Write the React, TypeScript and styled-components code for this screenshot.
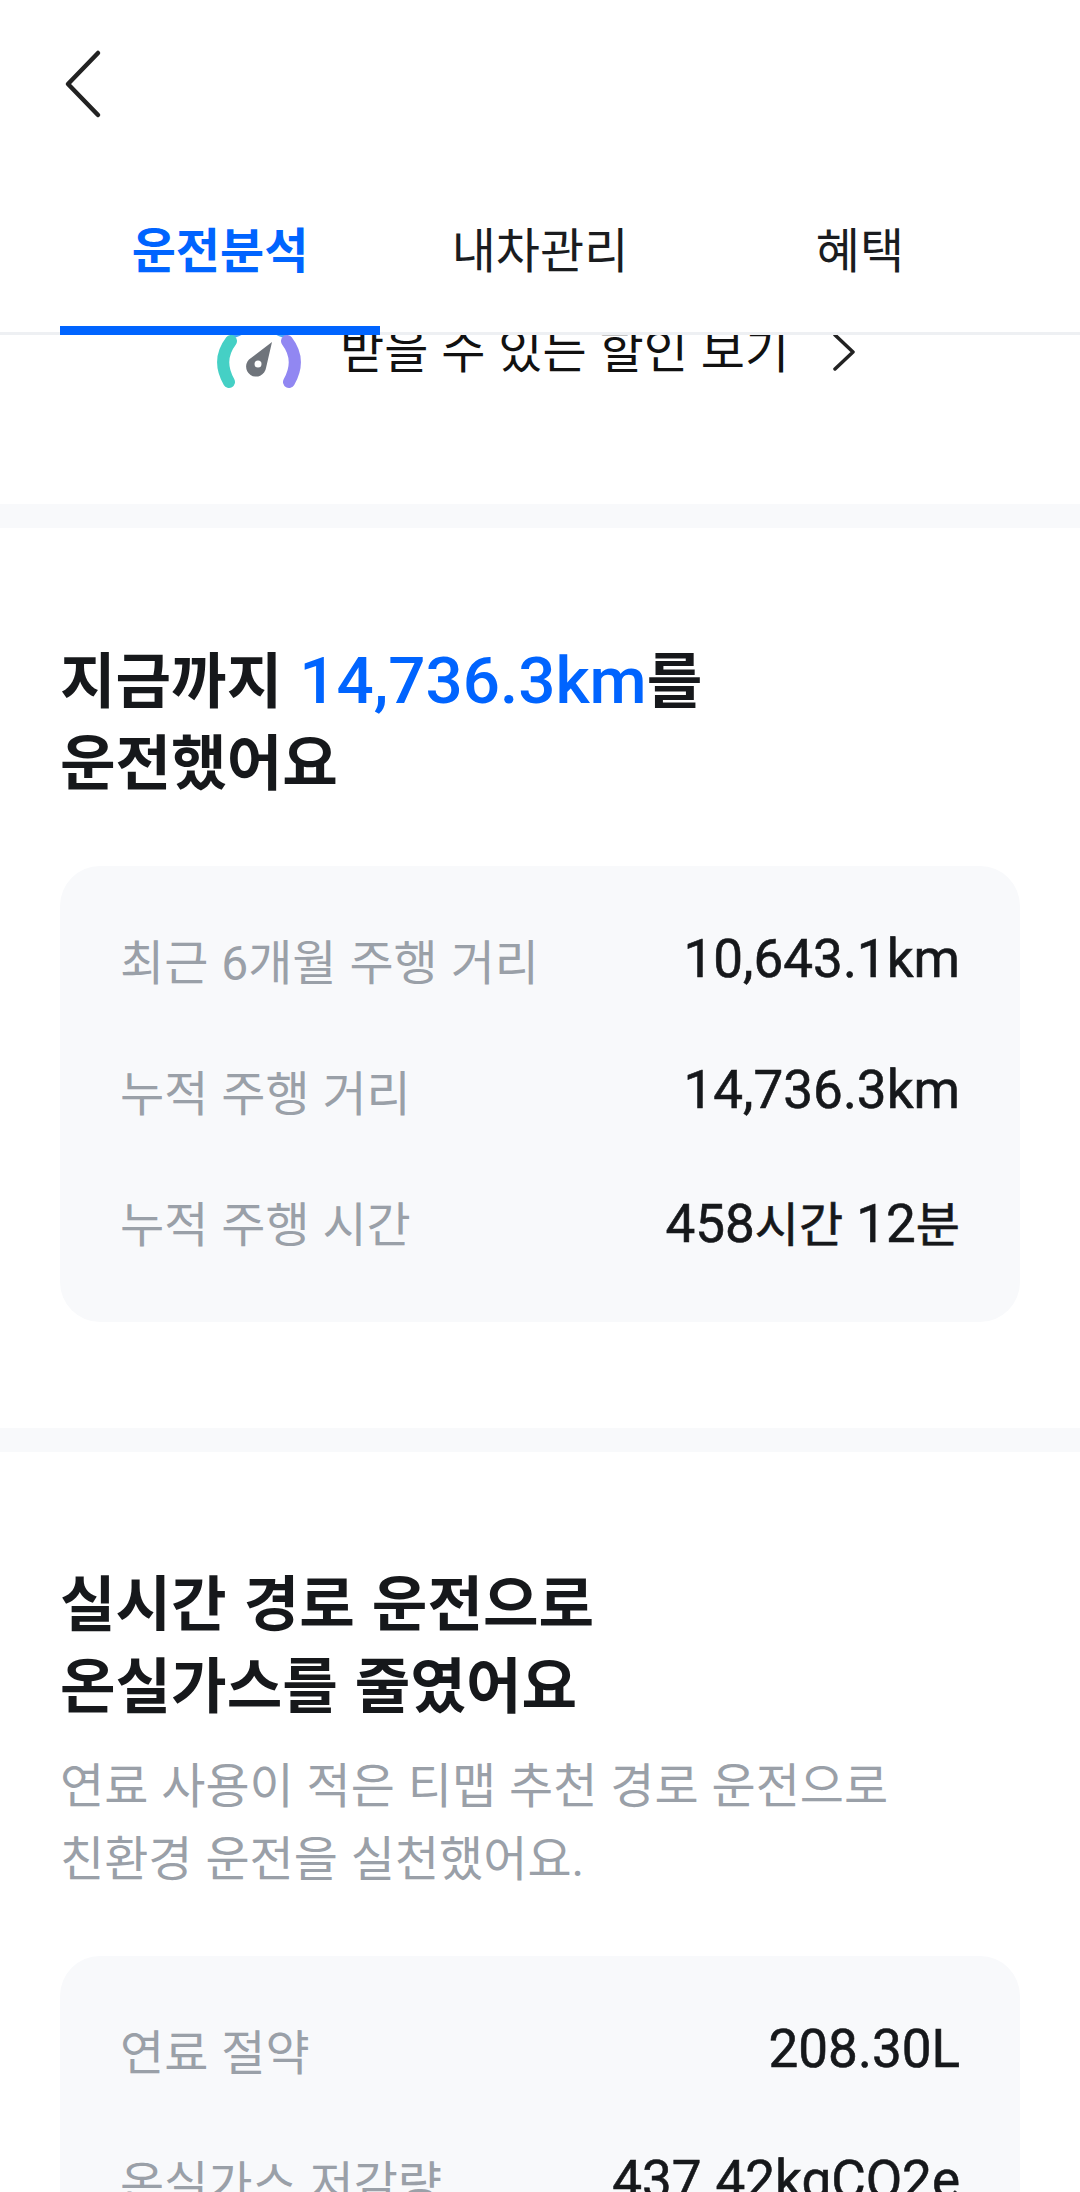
import React, { FC } from "react";
import styled, { createGlobalStyle } from "styled-components";

const GlobalStyle = createGlobalStyle`
  html, body {
    margin: 0;
    padding: 0;
    background: #fff;
    font-family: "Roboto", "Noto Sans CJK KR", sans-serif;
  }
  * { box-sizing: border-box; }
`;

const Page = styled.div`
  width: 1080px;
  height: 2192px;
  overflow: hidden;
  background: #f8f9fb;
`;

const Header = styled.header`
  position: relative;
  z-index: 2;
  background: #fff;
  height: 335px;
  border-bottom: 3px solid #eef0f3;
`;

const BackBar = styled.div`
  height: 188px;
  padding: 49px 0 0 64px;
  svg { display: block; }
`;

const Tabs = styled.nav`
  display: flex;
  padding: 0 60px;
`;

const Tab = styled.div<{ active?: boolean }>`
  width: 320px;
  height: 147px;
  padding-top: 32px;
  text-align: center;
  font-size: 48px;
  line-height: 64px;
  font-weight: ${({ active }) => (active ? 700 : 400)};
  color: ${({ active }) => (active ? "#0064ff" : "#1a1c1f")};
  border-bottom: ${({ active }) => (active ? "9px solid #0064ff" : "none")};
`;

const Section = styled.section<{ height: number }>`
  background: #fff;
  height: ${({ height }) => height}px;
  padding: 0 60px;
  margin-bottom: 24px;
  overflow: hidden;
`;

const DiscountRow = styled.div`
  display: flex;
  align-items: center;
  height: 100px;
  margin-top: -33px;
  padding-left: 155px;
  font-size: 48px;
  word-spacing: 1px;
  color: #111;
  svg { display: block; flex: none; }
`;

const DiscountLabel = styled.span`
  line-height: 64px;
  margin: 0 43px 0 37px;
  white-space: nowrap;
`;

const Title = styled.h2<{ top: number }>`
  margin: ${({ top }) => top}px 0 0;
  font-size: 60.4px;
  word-spacing: 2px;
  line-height: 82px;
  font-weight: 700;
  color: #16181b;
`;

const Accent = styled.span`
  color: #0064ff;
  font-size: 65.5px;
  font-weight: 500;
`;

const Sub = styled.p`
  margin: 21px 0 0;
  font-size: 48px;
  word-spacing: 1px;
  line-height: 73px;
  color: #9aa0a8;
`;

const Card = styled.div<{ top: number }>`
  margin-top: ${({ top }) => top}px;
  background: #f8f9fb;
  border-radius: 40px;
  padding: 27px 60px 36px;
  display: flex;
  flex-direction: column;
`;

const Row = styled.div`
  display: flex;
  justify-content: space-between;
  align-items: center;
  height: 131px;
`;

const Label = styled.span`
  font-size: 48px;
  word-spacing: 1px;
  color: #9aa0a8;
`;

const Value = styled.span`
  font-size: 53px;
  font-weight: 400;
  color: #16181b;
  -webkit-text-stroke: 0.6px #16181b;
`;

const Unit = styled.span`
  font-size: 48px;
`;

const Gauge: FC = () => (
  <svg width="88" height="104" viewBox="0 0 88 104" fill="none">
    <path d="M20 32C35 24 53 24 68 32" stroke="#4aa8f5" strokeWidth="11" strokeLinecap="round" />
    <path d="M16 41C6 54 6 68 14 82" stroke="#45d0c5" strokeWidth="12" strokeLinecap="round" />
    <path d="M72 41C82 54 82 68 74 82" stroke="#9187f2" strokeWidth="12" strokeLinecap="round" />
    <path d="M57 42L51 68A10 10 0 1 1 36 58Z" fill="#6f747b" />
    <circle cx="43" cy="64" r="3.5" fill="#fff" />
  </svg>
);

const App: FC = () => (
  <>
    <GlobalStyle />
    <Page>
      <Header>
        <BackBar>
          <svg width="40" height="70" viewBox="0 0 40 70" fill="none">
            <path d="M34 4L4 35L34 66" stroke="#222" strokeWidth="4.5" strokeLinecap="round" strokeLinejoin="round" />
          </svg>
        </BackBar>
        <Tabs>
          <Tab active>운전분석</Tab>
          <Tab>내차관리</Tab>
          <Tab>혜택</Tab>
        </Tabs>
      </Header>
      <Section height={169}>
        <DiscountRow>
          <Gauge />
          <DiscountLabel>받을 수 있는 할인 보기</DiscountLabel>
          <svg width="24" height="38" viewBox="0 0 24 38" fill="none">
            <path d="M3 2L21 19L3 36" stroke="#222" strokeWidth="3.5" strokeLinecap="round" strokeLinejoin="round" />
          </svg>
        </DiscountRow>
      </Section>
      <Section height={900}>
        <Title top={112}>
          지금까지 <Accent>14,736.3km</Accent>를
          <br />
          운전했어요
        </Title>
        <Card top={60}>
          <Row>
            <Label>최근 6개월 주행 거리</Label>
            <Value>10,643.1km</Value>
          </Row>
          <Row>
            <Label>누적 주행 거리</Label>
            <Value>14,736.3km</Value>
          </Row>
          <Row>
            <Label>누적 주행 시간</Label>
            <Value>
              458<Unit>시간</Unit> 12<Unit>분</Unit>
            </Value>
          </Row>
        </Card>
      </Section>
      <Section height={800}>
        <Title top={113}>
          실시간 경로 운전으로
          <br />
          온실가스를 줄였어요
        </Title>
        <Sub>
          연료 사용이 적은 티맵 추천 경로 운전으로
          <br />
          친환경 운전을 실천했어요.
        </Sub>
        <Card top={60}>
          <Row>
            <Label>연료 절약</Label>
            <Value>208.30L</Value>
          </Row>
          <Row>
            <Label>온실가스 저감량</Label>
            <Value>437.42kgCO2e</Value>
          </Row>
        </Card>
      </Section>
    </Page>
  </>
);

export default App;
